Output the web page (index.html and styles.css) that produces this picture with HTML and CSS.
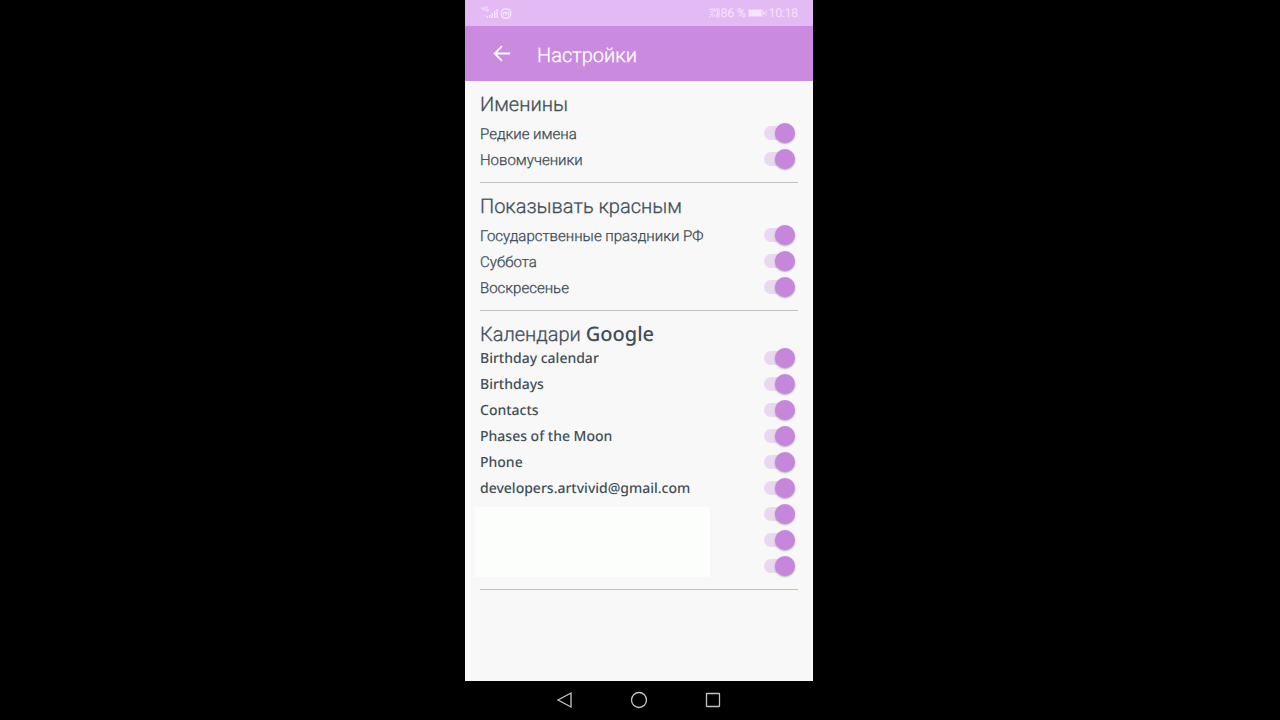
FILE: index.html
```html
<!DOCTYPE html>
<html lang="ru">
<head>
<meta charset="utf-8">
<meta name="viewport" content="width=device-width, initial-scale=1">
<title>Настройки</title>
<link rel="stylesheet" href="styles.css">
</head>
<body>
<div class="phone">
  <div class="status">
    <div class="status-group">
      <svg width="32" height="14" viewBox="0 0 32 14" fill="currentColor">
        <path d="M2 1v2h2M4 1v4M8 1H6v4h2V3H7" fill="none" stroke="currentColor" stroke-width=".9"/>
        <path d="M3 9l1.500 2L6 9" fill="none" stroke="currentColor" stroke-width=".7" opacity=".6"/>
        <path d="M6.500 10H8v2H6.500zM9 9h1.500v3H9zM11.500 7H13v5h-1.500zM14 5h1.500v7H14zM16.500 3H18v9h-1.500z"/>
        <circle cx="26" cy="7.500" r="4.800" fill="none" stroke="currentColor" stroke-width="1.500"/>
        <path d="M23.500 9.500V6.500M26 9.500V6.500M28.500 9.500V6.500M23 6.500h6" fill="none" stroke="currentColor" stroke-width="1.200"/>
      </svg>
    </div>
    <div class="status-group">
      <svg width="11" height="10" viewBox="0 0 12 10" fill="none" stroke="currentColor">
        <path d="M1 2.500V.7h10v8.600H7.500M1 4a5 5 0 0 1 5 5.300M1 6.300a3 3 0 0 1 3 3M3 2.700h6.200v4.800H7.500"/>
        <path d="M.5 8.300h1.300v1.300H.5z" fill="currentColor" stroke="none"/>
      </svg>
      <span>86 %</span>
      <svg class="battery" width="19" height="8" viewBox="0 0 19 8" fill="currentColor">
        <path d="M0 0h15v8H0z" opacity=".45"/><path d="M1 1h12.500v6H1zM15 2.500h1.500v3H15z"/><path d="M18 1v6" stroke="currentColor" stroke-width=".8"/>
      </svg>
      <time>10:18</time>
    </div>
  </div>
  <header class="appbar">
    <button class="back" type="button" aria-label="Назад">
      <svg width="18" height="18" viewBox="0 0 18 18" fill="none" stroke="currentColor" stroke-width="1.800"><path d="M17 8.500H2.500M9 1.200L1.700 8.500 9 15.800"/></svg>
    </button>
    <h1>Настройки</h1>
  </header>
  <main class="settings">
    <section class="group">
      <h2>Именины</h2>
      <label class="row"><span>Редкие имена</span><input class="switch" type="checkbox" role="switch" checked></label>
      <label class="row"><span>Новомученики</span><input class="switch" type="checkbox" role="switch" checked></label>
    </section>
    <section class="group">
      <h2>Показывать красным</h2>
      <label class="row"><span>Государственные праздники РФ</span><input class="switch" type="checkbox" role="switch" checked></label>
      <label class="row"><span>Суббота</span><input class="switch" type="checkbox" role="switch" checked></label>
      <label class="row"><span>Воскресенье</span><input class="switch" type="checkbox" role="switch" checked></label>
    </section>
    <section class="group calendars">
      <h2>Календари <span class="latin">Google</span></h2>
      <label class="row latin"><span>Birthday calendar</span><input class="switch" type="checkbox" role="switch" checked></label>
      <label class="row latin"><span>Birthdays</span><input class="switch" type="checkbox" role="switch" checked></label>
      <label class="row latin"><span>Contacts</span><input class="switch" type="checkbox" role="switch" checked></label>
      <label class="row latin"><span>Phases of the Moon</span><input class="switch" type="checkbox" role="switch" checked></label>
      <label class="row latin"><span>Phone</span><input class="switch" type="checkbox" role="switch" checked></label>
      <label class="row latin"><span>developers.artvivid@gmail.com</span><input class="switch" type="checkbox" role="switch" checked></label>
      <div class="masked">
        <div class="mask"></div>
        <div>
          <div class="row"><input class="switch" type="checkbox" role="switch" aria-label="Календарь 7" checked></div>
          <div class="row"><input class="switch" type="checkbox" role="switch" aria-label="Календарь 8" checked></div>
          <div class="row"><input class="switch" type="checkbox" role="switch" aria-label="Календарь 9" checked></div>
        </div>
      </div>
    </section>
  </main>
  <nav class="navbar">
    <button type="button" aria-label="Назад"><svg width="18" height="18" viewBox="0 0 18 18"><path d="M15 2v14L2 9z"/></svg></button>
    <button type="button" aria-label="Домой"><svg width="18" height="18" viewBox="0 0 18 18"><circle cx="9" cy="9" r="7.500"/></svg></button>
    <button type="button" aria-label="Недавние"><svg width="18" height="18" viewBox="0 0 18 18"><rect x="2.500" y="2.500" width="13" height="13" rx=".5"/></svg></button>
  </nav>
</div>
</body>
</html>
```
FILE: styles.css
```css
* { box-sizing: border-box; }

body {
  margin: 0;
  padding-right: 2px;
  background: #000;
  color: #3f4f58;
  font-family: Roboto, "Noto Sans", sans-serif;
  font-weight: 300;
  -webkit-text-stroke: 0.3px;
  text-rendering: geometricPrecision;
  display: flex;
  justify-content: center;
}

button {
  border: 0;
  padding: 0;
  background: none;
  color: inherit;
  display: flex;
  cursor: pointer;
}

.phone {
  min-height: 100vh;
  aspect-ratio: 29 / 60;
  display: flex;
  flex-direction: column;
  background: #f8f8f8;
}

.status {
  height: 26px;
  padding: 0 15px;
  display: flex;
  align-items: center;
  justify-content: space-between;
  background: #e4baf5;
  color: #f6e3fc;
  font-size: 12px;
}

.status-group {
  display: flex;
  align-items: center;
  gap: 1px;
}

.battery { margin: 0 1px; }

.appbar {
  height: 55px;
  padding: 0 28px;
  display: flex;
  align-items: center;
  gap: 26px;
  background: #c98ae0;
  color: #fff;
}

.appbar h1 {
  margin: 0;
  padding-top: 3px;
  font-size: 20px;
  line-height: 24px;
  font-weight: inherit;
}

.settings {
  flex: 1;
  padding: 0 15px;
}

.group {
  padding: 12px 0 10px;
  border-bottom: 1px solid #c0c0c0;
}

.group h2 {
  margin: 0 0 5px;
  font-size: 20px;
  line-height: 22px;
  font-weight: inherit;
}

.calendars h2 { margin: 0; }

.latin {
  font-family: "Noto Sans", sans-serif;
  font-weight: 500;
  -webkit-text-stroke: 0;
}

h2 .latin { line-height: 1; }

.row {
  height: 26px;
  padding-right: 3px;
  display: flex;
  align-items: center;
  justify-content: space-between;
  font-size: 15px;
  line-height: 20px;
}

.row > span { padding-top: 1px; }

.row.latin { font-size: 14px; }

.switch {
  appearance: none;
  width: 31px;
  height: 20px;
  margin: 0;
  display: flex;
  align-items: center;
  cursor: pointer;
}

.switch::before {
  content: "";
  width: 28px;
  height: 14px;
  border-radius: 7px;
  background: #ead8f1;
}

.switch::after {
  content: "";
  width: 20px;
  height: 20px;
  margin-left: -17px;
  border-radius: 50%;
  background: #c586dc;
  box-shadow: 0 1px 2px rgba(0, 0, 0, .3);
}

.switch:not(:checked)::after { margin-left: -28px; }

.masked {
  display: flex;
  justify-content: space-between;
}

.mask {
  width: 74%;
  margin: 6px 0 2px -5px;
  background: #fcfefc;
}

.navbar {
  height: 39px;
  padding: 0 91px 1px;
  display: flex;
  align-items: center;
  justify-content: space-between;
  background: #000;
}

.navbar svg {
  fill: none;
  stroke: #c4c4c4;
  stroke-width: 1.3;
}
```
